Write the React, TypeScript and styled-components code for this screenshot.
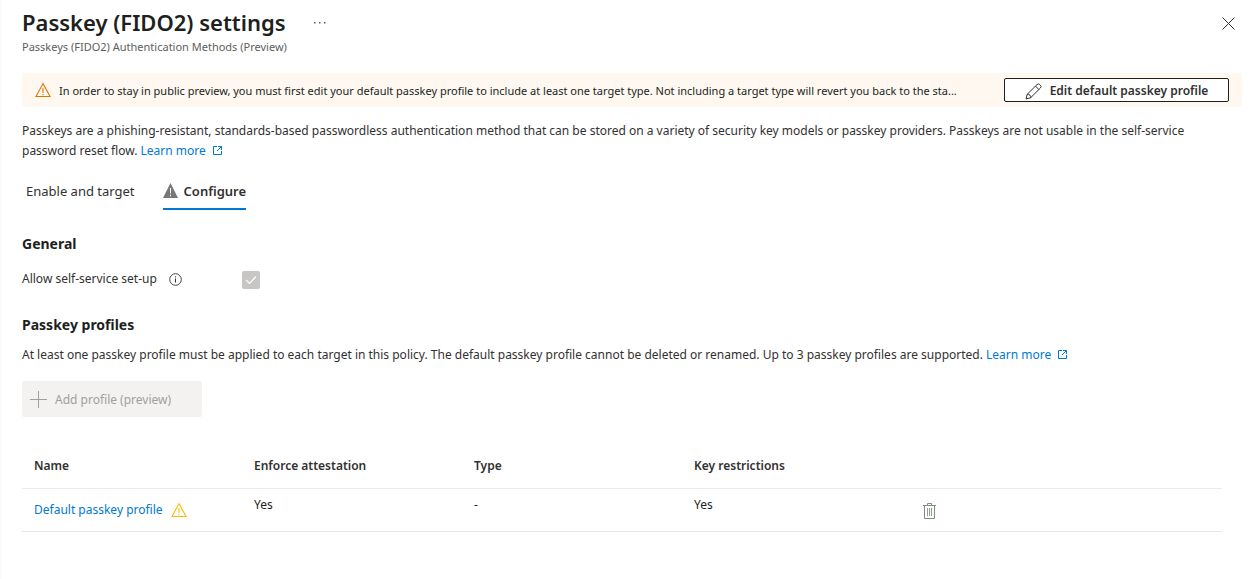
import React from "react";
import styled, { createGlobalStyle, css } from "styled-components";

const Global = createGlobalStyle`
  *, *::before, *::after { box-sizing: border-box; }
  body {
    margin: 0;
    background: #fff;
    color: #323130;
    font-family: "Segoe UI", "Noto Sans", "Open Sans", sans-serif;
    font-size: 12px;
    line-height: 20px;
  }
  button { font: inherit; color: inherit; cursor: pointer; }
  svg { display: block; flex: none; }
`;

const Blade = styled.main`
  min-height: 100vh;
  border-left: 2px solid #fafafa;
  padding: 4px 9px 24px 20px;
`;

const Header = styled.header`
  display: flex;
  align-items: flex-start;
  justify-content: space-between;
`;

const TitleRow = styled.div`
  display: flex;
  align-items: center;
  gap: 26px;
  height: 36px;
`;

const Title = styled.h1`
  margin: 0;
  font-size: 22px;
  line-height: 36px;
  font-weight: 600;
  color: #201f1e;
`;

const Subtitle = styled.p`
  margin: 0;
  font-size: 11px;
  line-height: 14px;
  color: #605e5c;
`;

const IconButton = styled.button`
  display: inline-flex;
  align-items: center;
  justify-content: center;
  width: 16px;
  height: 24px;
  padding: 0;
  border: 0;
  background: none;
`;

const CloseButton = styled(IconButton)`
  width: 28px;
  height: 38px;
`;

const Banner = styled.section`
  display: flex;
  align-items: center;
  gap: 8px;
  height: 34px;
  margin-top: 19px;
  padding: 0 13px;
  background: #fff8f0;
`;

const BannerText = styled.span`
  flex: 1;
  min-width: 0;
  margin-right: 12px;
  padding-top: 1px;
  overflow: hidden;
  white-space: nowrap;
  text-overflow: ellipsis;
  font-size: 11px;
  color: #201f1e;
`;

const EditButton = styled.button`
  display: flex;
  align-items: center;
  justify-content: center;
  gap: 8px;
  width: 225px;
  height: 24px;
  padding: 2px 0 0;
  border: 1px solid #201f1e;
  border-radius: 2px;
  background: #fff;
  font-weight: 600;
`;

const Content = styled.div`
  padding-right: 20px;
`;

const Paragraph = styled.p<{ $top: number }>`
  margin: ${(p) => p.$top}px 0 0;
`;

const Link = styled.a`
  color: #0078d4;
  text-decoration: none;
  svg { display: inline-block; margin-left: 6px; vertical-align: -1px; }
`;

const Tabs = styled.div`
  display: flex;
  gap: 28px;
  margin-top: 10px;
  padding-left: 4px;
`;

const Tab = styled.button<{ $active?: boolean }>`
  display: flex;
  align-items: center;
  gap: 6px;
  height: 39px;
  padding: 2px 0 0;
  border: 0;
  border-bottom: 2px solid transparent;
  background: none;
  font-size: 13px;
  ${(p) =>
    p.$active &&
    css`
      border-bottom-color: #0078d4;
      font-weight: 600;
    `}
`;

const SectionTitle = styled.h2<{ $top: number }>`
  margin: ${(p) => p.$top}px 0 0;
  font-size: 14px;
  line-height: 20px;
  font-weight: 700;
  color: #201f1e;
`;

const Field = styled.div`
  display: flex;
  align-items: flex-end;
  margin-top: 15px;
`;

const FieldLabel = styled.label`
  display: flex;
  align-items: center;
  gap: 12px;
  width: 220px;
`;

const CheckWrap = styled.span`
  display: grid;
  > * { grid-area: 1 / 1; }
  > svg { pointer-events: none; }
`;

const Checkbox = styled.input`
  appearance: none;
  width: 18px;
  height: 18px;
  margin: 0;
  border-radius: 2px;
  background: #c8c6c4;
`;

const AddButton = styled.button`
  display: flex;
  align-items: center;
  gap: 8px;
  width: 180px;
  height: 36px;
  margin-top: 16px;
  padding: 0 8px;
  border: 0;
  border-radius: 2px;
  background: #f3f2f1;
  color: #a19f9d;
  cursor: default;
`;

const AddLabel = styled.span`
  padding-top: 2px;
`;

const Table = styled.table`
  width: 100%;
  margin-top: 28px;
  border-collapse: collapse;
  table-layout: fixed;
`;

const Th = styled.th<{ $width?: number }>`
  width: ${(p) => (p.$width ? `${p.$width}px` : "auto")};
  height: 43px;
  padding: 0 12px;
  text-align: left;
  font-weight: 600;
  border-bottom: 1px solid #edebe9;
`;

const Td = styled.td`
  height: 43px;
  padding: 6px 12px;
  vertical-align: top;
  border-bottom: 1px solid #e6e6e6;
  color: #201f1e;
`;

const CellRow = styled.div`
  display: flex;
  align-items: center;
  gap: 8px;
  height: 30px;
`;

const TrashCell = styled(Td)`
  padding: 8px 12px 4px 19px;
`;

const WarnIcon = ({ color }: { color: string }) => (
  <svg width="16" height="16" viewBox="0 0 16 16" fill="none" stroke={color} aria-hidden="true">
    <path d="M8 1.6 15 14.5H1Z" strokeWidth="1.1" />
    <path d="M8 6v5M8 12v1.2" strokeWidth="1.1" />
  </svg>
);

const SolidWarnIcon = () => (
  <svg width="15" height="16" viewBox="0 0 15 16" aria-hidden="true">
    <path d="M7.5 0 15 15H0Z" fill="#797775" />
    <path d="M7.5 5v5.5M7.5 11.8v1.5" stroke="#fff" strokeWidth="1" />
  </svg>
);

const ExternalIcon = () => (
  <svg width="11" height="11" viewBox="0 0 11 11" fill="none" stroke="currentColor" aria-hidden="true">
    <path d="M5 1.5H1.5v8h8V6M6 1.5h3.5V5M9.5 1.5 5 6" />
  </svg>
);

const PencilIcon = () => (
  <svg width="17" height="17" viewBox="0 0 17 17" fill="none" stroke="#323130" strokeLinejoin="round" aria-hidden="true">
    <path d="M1 16 2.2 11.3 12 1.6a1.9 1.9 0 0 1 2.8 0l.6.6a1.9 1.9 0 0 1 0 2.8L5.7 14.7ZM2.2 11.3a3 3 0 0 1 3.5 3.4M10.5 3.1l3.4 3.4" />
  </svg>
);

const InfoIcon = () => (
  <svg width="13" height="13" viewBox="0 0 13 13" fill="none" stroke="#323130" aria-hidden="true">
    <circle cx="6.5" cy="6.5" r="5.8" strokeWidth="0.9" />
    <path d="M6.5 5.5v4M6.5 3.3v1.1" />
  </svg>
);

const TrashIcon = () => (
  <svg width="13" height="17" viewBox="0 0 13 17" fill="none" stroke="#8a8886" aria-hidden="true">
    <path d="M0 2.5h13M4.5 2.5v-2h4v2M1.5 2.5v13h10v-13" />
    <path d="M4.5 5v8M6.5 5v8M8.5 5v8" stroke="#86a886" />
  </svg>
);

export default function App() {
  return (
    <>
      <Global />
      <Blade>
        <Header>
          <div>
            <TitleRow>
              <Title>Passkey (FIDO2) settings</Title>
              <IconButton aria-label="More">
                <svg width="14" height="4" viewBox="0 0 14 4" fill="#605e5c" aria-hidden="true">
                  <path d="M1 2h1.5v1.5H1zM6 2h1.5v1.5H6zM11 2h1.5v1.5H11z" />
                </svg>
              </IconButton>
            </TitleRow>
            <Subtitle>Passkeys (FIDO2) Authentication Methods (Preview)</Subtitle>
          </div>
          <CloseButton aria-label="Close">
            <svg width="13" height="13" viewBox="0 0 13 13" stroke="#323130" aria-hidden="true">
              <path d="M.5.5l12 12M12.5.5l-12 12" />
            </svg>
          </CloseButton>
        </Header>

        <Banner>
          <WarnIcon color="#db7500" />
          <BannerText>
            In order to stay in public preview, you must first edit your default passkey profile to include at least one
            target type. Not including a target type will revert you back to the sta...
          </BannerText>
          <EditButton>
            <PencilIcon />
            Edit default passkey profile
          </EditButton>
        </Banner>

        <Content>
          <Paragraph $top={14}>
            Passkeys are a phishing-resistant, standards-based passwordless authentication method that can be stored on a
            variety of security key models or passkey providers. Passkeys are not usable in the self-service password
            reset flow.{" "}
            <Link href="#learn-passkeys">
              Learn more
              <ExternalIcon />
            </Link>
          </Paragraph>

          <Tabs role="tablist">
            <Tab role="tab" aria-selected="false">
              Enable and target
            </Tab>
            <Tab role="tab" aria-selected="true" $active>
              <SolidWarnIcon />
              Configure
            </Tab>
          </Tabs>

          <SectionTitle $top={24}>General</SectionTitle>
          <Field>
            <FieldLabel htmlFor="self-service">
              Allow self-service set-up
              <InfoIcon />
            </FieldLabel>
            <CheckWrap>
              <Checkbox id="self-service" type="checkbox" defaultChecked disabled />
              <svg width="18" height="18" viewBox="0 0 18 18" fill="none" stroke="#fff" strokeWidth="1.2" aria-hidden="true">
                <path d="m4 9 3.5 3.5L14 5.5" />
              </svg>
            </CheckWrap>
          </Field>

          <SectionTitle $top={26}>Passkey profiles</SectionTitle>
          <Paragraph $top={10}>
            At least one passkey profile must be applied to each target in this policy. The default passkey profile
            cannot be deleted or renamed. Up to 3 passkey profiles are supported.{" "}
            <Link href="#learn-profiles">
              Learn more
              <ExternalIcon />
            </Link>
          </Paragraph>

          <AddButton disabled>
            <svg width="17" height="17" viewBox="0 0 17 17" stroke="#a19f9d" aria-hidden="true">
              <path d="M8.5 0v17M0 8.5h17" />
            </svg>
            <AddLabel>Add profile (preview)</AddLabel>
          </AddButton>

          <Table>
            <thead>
              <tr>
                <Th $width={220}>Name</Th>
                <Th $width={220}>Enforce attestation</Th>
                <Th $width={220}>Type</Th>
                <Th $width={220}>Key restrictions</Th>
                <Th aria-label="Actions" />
              </tr>
            </thead>
            <tbody>
              <tr>
                <Td>
                  <CellRow>
                    <Link href="#default-profile">Default passkey profile</Link>
                    <WarnIcon color="#ffb900" />
                  </CellRow>
                </Td>
                <Td>Yes</Td>
                <Td>-</Td>
                <Td>Yes</Td>
                <TrashCell>
                  <CellRow>
                    <IconButton aria-label="Delete Default passkey profile">
                      <TrashIcon />
                    </IconButton>
                  </CellRow>
                </TrashCell>
              </tr>
            </tbody>
          </Table>
        </Content>
      </Blade>
    </>
  );
}
